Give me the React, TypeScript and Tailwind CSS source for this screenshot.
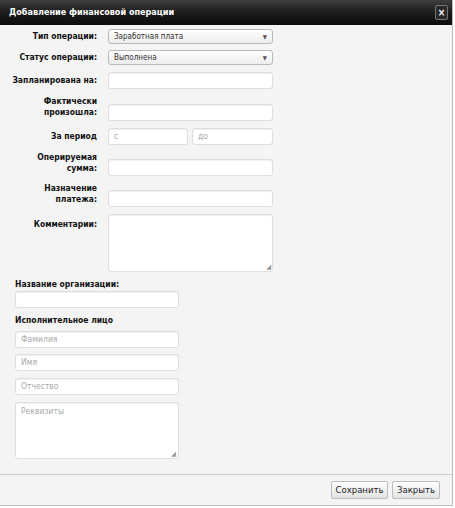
import React from "react";

const labelCls =
  "w-[98px] shrink-0 flex flex-col items-end whitespace-nowrap text-right pr-[1px] font-bold text-[8.5px] leading-[11px] text-[#111]";
const inputCls =
  "h-[17px] rounded-[3px] border border-[#dedede] bg-white shadow-[inset_0_1px_1px_rgba(0,0,0,0.06)] px-[5px] text-[8.5px] text-[#aaa] flex items-center";

function Select({ value }: { value: string }) {
  return (
    <div className="ml-[10px] w-[165px] h-[15px] rounded-[3px] border border-[#b9b9b9] bg-gradient-to-b from-white to-[#ececec] flex items-center justify-between pl-[5px] pr-[5px] text-[8px] text-[#333]">
      <span>{value}</span>
      <span className="text-[6px] text-[#555]">▼</span>
    </div>
  );
}

function Field({ w, ph, h }: { w: string; ph?: string; h?: string }) {
  return (
    <div className={`${inputCls} ${w} ${h ?? ""}`}>
      <span>{ph}</span>
    </div>
  );
}

export default function App() {
  return (
    <div
      className="w-[455px] h-[508px] bg-white overflow-hidden"
      style={{ fontFamily: '"DejaVu Sans Condensed", "DejaVu Sans", Verdana, sans-serif' }}
    >
      <div className="w-[453px] h-[506px] border-r border-b border-[#bdbdbd] bg-[#f4f4f4] flex flex-col">
        {/* Header */}
        <div className="h-[25px] shrink-0 bg-gradient-to-b from-[#3e3e3e] via-[#1c1c1c] to-[#0c0c0c] flex items-center justify-between pl-[9px] pr-[4px]">
          <span className="text-white font-bold text-[9px]">Добавление финансовой операции</span>
          <div className="w-[13px] h-[15px] rounded-[2px] border border-[#777] bg-[#2a2a2a] flex items-center justify-center text-white font-bold text-[10px] leading-none">
            ×
          </div>
        </div>

        {/* Body */}
        <div className="flex-1 flex flex-col pt-[4px]">
          <div className="flex items-center h-[15px]">
            <div className={labelCls}>Тип операции:</div>
            <Select value="Заработная плата" />
          </div>
          <div className="flex items-center h-[15px] mt-[6px]">
            <div className={labelCls}>Статус операции:</div>
            <Select value="Выполнена" />
          </div>
          <div className="flex items-center mt-[7px]">
            <div className={labelCls}>Запланирована на:</div>
            <div className="ml-[10px]">
              <Field w="w-[165px]" />
            </div>
          </div>
          <div className="flex items-start mt-[7px]">
            <div className={labelCls}>
              <span>Фактически</span>
              <span>произошла:</span>
            </div>
            <div className="ml-[10px] mt-[8px]">
              <Field w="w-[165px]" />
            </div>
          </div>
          <div className="flex items-center mt-[7px]">
            <div className={labelCls}>За период</div>
            <div className="ml-[10px] flex gap-[4px]">
              <Field w="w-[80px]" ph="с" />
              <Field w="w-[81px]" ph="до" />
            </div>
          </div>
          <div className="flex items-start mt-[7px]">
            <div className={labelCls}>
              <span>Оперируемая</span>
              <span>сумма:</span>
            </div>
            <div className="ml-[10px] mt-[7px]">
              <Field w="w-[165px]" />
            </div>
          </div>
          <div className="flex items-start mt-[7px]">
            <div className={labelCls}>
              <span>Назначение</span>
              <span>платежа:</span>
            </div>
            <div className="ml-[10px] mt-[7px]">
              <Field w="w-[165px]" />
            </div>
          </div>
          <div className="flex items-start mt-[7px]">
            <div className={`${labelCls} mt-[5px]`}>Комментарии:</div>
            <div className="ml-[10px] relative">
              <Field w="w-[165px]" h="!h-[58px]" />
              <span className="absolute right-[2px] bottom-[1px] text-[7px] leading-none text-[#999]">◢</span>
            </div>
          </div>

          <div className="pl-[15px] mt-[7px] flex flex-col">
            <div className="font-bold text-[8.5px] leading-[11px] text-[#111]">Название организации:</div>
            <div className="mt-[1px]">
              <Field w="w-[164px]" />
            </div>
            <div className="font-bold text-[8.5px] leading-[11px] text-[#111] mt-[7px]">Исполнительное лицо</div>
            <div className="mt-[5px] flex flex-col">
              <Field w="w-[164px]" ph="Фамилия" />
              <div className="mt-[6px]">
                <Field w="w-[164px]" ph="Имя" />
              </div>
              <div className="mt-[7px]">
                <Field w="w-[164px]" ph="Отчество" />
              </div>
              <div className="relative mt-[7px]">
                <div className="w-[164px] h-[57px] rounded-[3px] border border-[#dedede] bg-white shadow-[inset_0_1px_1px_rgba(0,0,0,0.06)] px-[5px] pt-[2px] text-[8.5px] text-[#aaa]">
                  Реквизиты
                </div>
                <span className="absolute left-[156px] bottom-[1px] text-[7px] leading-none text-[#999]">◢</span>
              </div>
            </div>
          </div>
        </div>

        {/* Footer */}
        <div className="h-[31px] shrink-0 border-t border-[#cfcfcf] flex items-start justify-end gap-[4px] pt-[6px] pr-[12px]">
          <button className="w-[57px] h-[18px] rounded-[2px] border border-[#bcbcbc] bg-gradient-to-b from-white to-[#e3e3e3] text-[9.5px] text-[#222] leading-none">
            Сохранить
          </button>
          <button className="w-[48px] h-[18px] rounded-[2px] border border-[#bcbcbc] bg-gradient-to-b from-white to-[#e3e3e3] text-[9.5px] text-[#222] leading-none">
            Закрыть
          </button>
        </div>
      </div>
    </div>
  );
}
